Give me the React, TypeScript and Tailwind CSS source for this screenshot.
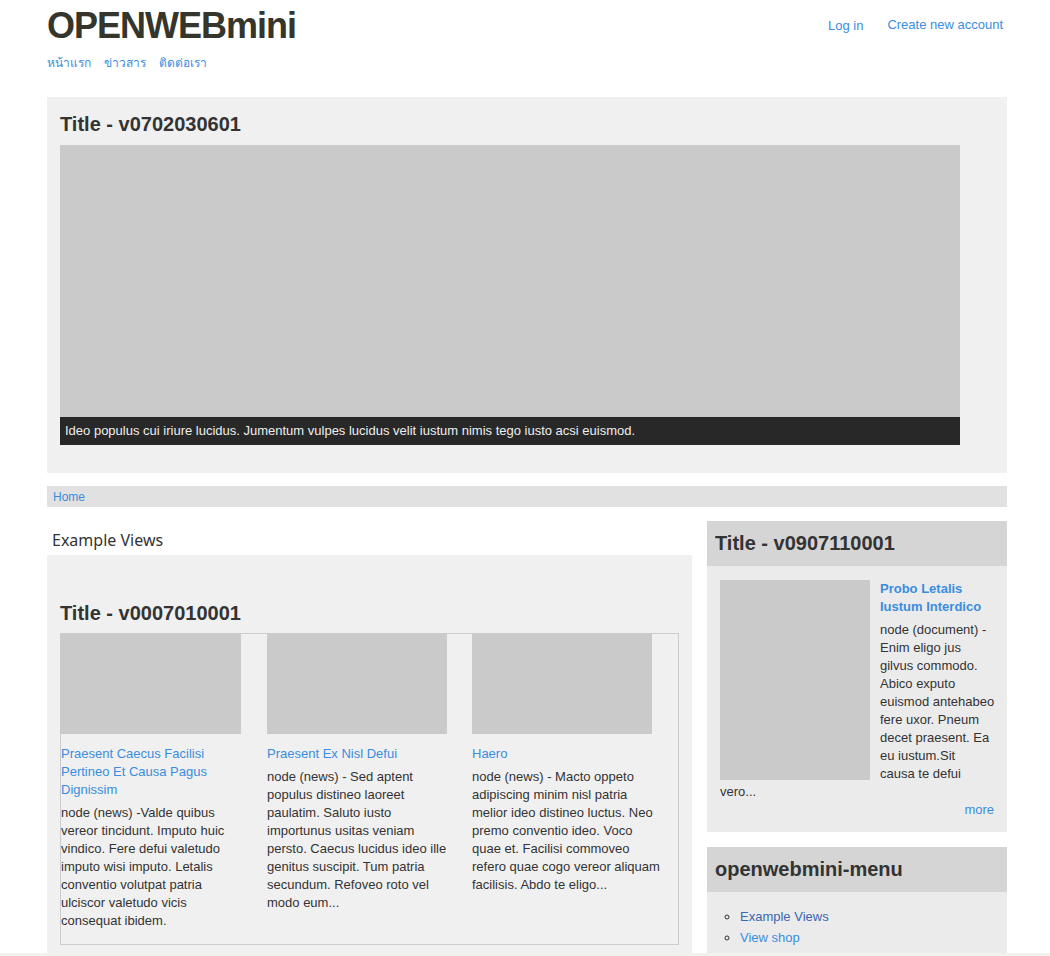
import React from "react";

const columns = [
  {
    title: "Praesent Caecus Facilisi Pertineo Et Causa Pagus Dignissim",
    body: "node (news) -Valde quibus vereor tincidunt. Imputo huic vindico. Fere defui valetudo imputo wisi imputo. Letalis conventio volutpat patria ulciscor valetudo vicis consequat ibidem.",
  },
  {
    title: "Praesent Ex Nisl Defui",
    body: "node (news) - Sed aptent populus distineo laoreet paulatim. Saluto iusto importunus usitas veniam persto. Caecus lucidus ideo ille genitus suscipit. Tum patria secundum. Refoveo roto vel modo eum...",
  },
  {
    title: "Haero",
    body: "node (news) - Macto oppeto adipiscing minim nisl patria melior ideo distineo luctus. Neo premo conventio ideo. Voco quae et. Facilisi commoveo refero quae cogo vereor aliquam facilisis. Abdo te eligo...",
  },
];

// lines of the teaser as they wrap beside the picture
const teaser = [
  "node (document) -",
  "Enim eligo jus",
  "gilvus commodo.",
  "Abico exputo",
  "euismod antehabeo",
  "fere uxor. Pneum",
  "decet praesent. Ea",
  "eu iustum.Sit",
  "causa te defui",
];

function BlockHeader({ children }: { children: React.ReactNode }) {
  return (
    <h2 className="h-[45px] bg-[#d5d5d5] pl-[8px] text-[20px] font-bold leading-[45px] text-[#333]">
      {children}
    </h2>
  );
}

export default function App() {
  return (
    <div className="min-h-[1150px] bg-white font-['Liberation_Sans',Arial,sans-serif] text-[13px] text-[#333]">
      <div className="ml-[47px] w-[960px]">
        {/* header */}
        <header className="flex h-[97px] justify-between">
          <div className="pt-[5px]">
            <div className="text-[36px] font-bold leading-[41px] tracking-[-1px] text-[#35352b]">
              OPENWEBmini
            </div>
            <nav className="mt-[7px] flex gap-[13px] text-[12px] leading-[20px] text-[#3a8dde]">
              <a href="#">หน้าแรก</a>
              <a href="#">ข่าวสาร</a>
              <a href="#">ติดต่อเรา</a>
            </nav>
          </div>
          <div className="flex gap-[24px] pr-[4px] pt-[16px] leading-[18px] text-[#3a8dde]">
            <a href="#" className="mt-[1px]">
              Log in
            </a>
            <a href="#">Create new account</a>
          </div>
        </header>

        {/* slideshow */}
        <section className="bg-[#f0f0f0] px-[13px] pb-[28px] pt-[15px]">
          <h2 className="mb-[9px] text-[20px] font-bold leading-[24px] text-[#333]">
            Title - v0702030601
          </h2>
          <div className="flex h-[300px] w-[900px] flex-col justify-end bg-[#cacaca]">
            <div className="h-[28px] bg-[#282828] px-[5px] leading-[28px] text-[#eeeeee]">
              Ideo populus cui iriure lucidus. Jumentum vulpes lucidus velit iustum nimis tego iusto acsi euismod.
            </div>
          </div>
        </section>

        {/* breadcrumb */}
        <div className="mt-[13px] h-[21px] overflow-hidden bg-[#e1e1e1] pl-[6px] text-[12px] leading-[23px]">
          <a href="#" className="text-[#3a8dde]">
            Home
          </a>
        </div>

        <div className="mt-[14px] flex gap-[15px]">
          {/* main column */}
          <main className="w-[645px]">
            <h3 className="pl-[5px] pt-[4px] font-['Noto_Sans',sans-serif] text-[16px] leading-[30px] text-[#333]">
              Example Views
            </h3>
            <div className="bg-[#f0f0f0] px-[13px] pb-[30px] pt-[46px]">
              <h2 className="mb-[8px] text-[20px] font-bold leading-[24px] text-[#333]">
                Title - v0007010001
              </h2>
              <div className="grid grid-cols-[206px_205px_206px] border border-[#cccccc] pb-[14px]">
                {columns.map((c) => (
                  <div key={c.title}>
                    <div className="h-[100px] w-[180px] bg-[#cacaca]" />
                    <a href="#" className="mt-[11px] block max-w-[190px] leading-[18px] text-[#3a8dde]">
                      {c.title}
                    </a>
                    <p className="mt-[5px] max-w-[188.2px] leading-[18px]">{c.body}</p>
                  </div>
                ))}
              </div>
            </div>
          </main>

          {/* sidebar */}
          <aside className="w-[300px]">
            <div className="bg-[#ebebeb]">
              <BlockHeader>Title - v0907110001</BlockHeader>
              <div className="pb-[13px] pl-[13px] pr-[10px] pt-[14px]">
                <div className="float-left mr-[10px] h-[200px] w-[150px] bg-[#cacaca]" />
                <a href="#" className="block font-bold leading-[18px] text-[#3a8dde]">
                  Probo Letalis Iustum Interdico
                </a>
                <p className="mt-[5px] leading-[18px]">
                  {teaser.map((line) => (
                    <React.Fragment key={line}>
                      {line}
                      <br />
                    </React.Fragment>
                  ))}
                  vero...
                </p>
                <div className="pr-[3px] text-right leading-[18px]">
                  <a href="#" className="text-[#3a8dde]">
                    more
                  </a>
                </div>
              </div>
            </div>

            <div className="mt-[15px] bg-[#ebebeb]">
              <BlockHeader>openwebmini-menu</BlockHeader>
              <ul className="list-[circle] pb-[13px] pl-[33px] pt-[14px] leading-[21px]">
                <li>
                  <a href="#" className="text-[#3b66b0]">
                    Example Views
                  </a>
                </li>
                <li>
                  <a href="#" className="text-[#3a8dde]">
                    View shop
                  </a>
                </li>
              </ul>
            </div>
          </aside>
        </div>
      </div>
      <div className="fixed bottom-0 left-0 right-0 h-[3px] bg-[#f1f1ed]" />
    </div>
  );
}
